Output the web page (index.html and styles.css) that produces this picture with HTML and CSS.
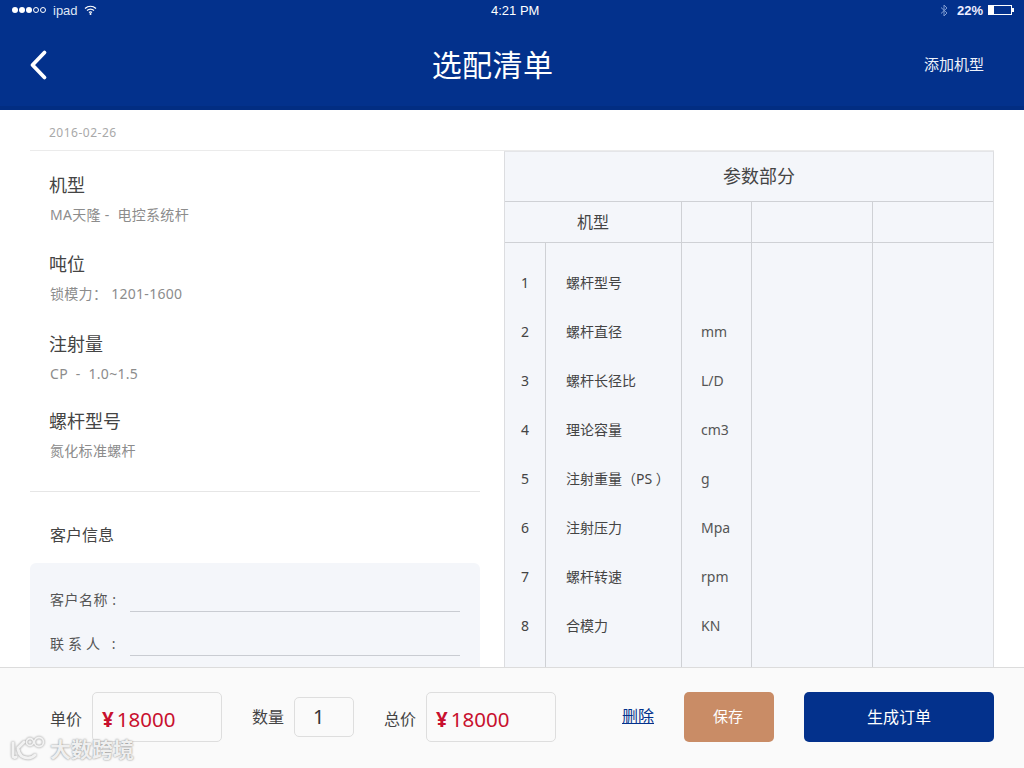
FILE: index.html
```html
<!DOCTYPE html>
<html lang="zh-CN">
<head>
<meta charset="utf-8">
<title>选配清单</title>
<link rel="stylesheet" href="styles.css">
</head>
<body>
<div class="page">
  <header class="topbar">
    <div class="status">
      <div class="status-left">
        <span class="dot"></span><span class="dot"></span><span class="dot"></span><span class="dot off"></span><span class="dot off"></span>
        <span class="carrier">ipad</span>
        <svg class="wifi" width="13" height="10" viewBox="0 0 13 10"><path d="M1 3.6C4.3.6 8.7.6 12 3.6M3 5.6c2.2-1.900 4.800-1.900 7 0M5 7.500c1-.8 2-.8 3 0" fill="none" stroke="#fff" stroke-width="1.300"/><circle cx="6.500" cy="9" r="1" fill="#fff"/></svg>
      </div>
      <div class="status-time">4:21 PM</div>
      <div class="status-right">
        <svg class="bt" width="8" height="13" viewBox="0 0 8 13"><path d="M1 3.500l6 5.500-3 3V1l3 3-6 5.500" fill="none" stroke="#7f9bd0" stroke-width="1"/></svg>
        <span class="pct">22%</span>
        <span class="battery"><span class="battery-fill"></span></span><span class="battery-tip"></span>
      </div>
    </div>
    <nav class="nav">
      <svg class="back" width="20" height="32" viewBox="0 0 20 32"><path d="M16.500 3.500L4.500 16l12 12.500" fill="none" stroke="#fff" stroke-width="3.800" stroke-linecap="round" stroke-linejoin="round"/></svg>
      <h1 class="title">选配清单</h1>
      <a class="add">添加机型</a>
    </nav>
  </header>

  <main class="main">
    <div class="date-row">2016-02-26</div>
    <div class="columns">
      <section class="left">
        <div class="specs">
          <div class="spec spec-first"><div class="spec-name">机型</div><div class="spec-value">MA天隆 -&nbsp; 电控系统杆</div></div>
          <div class="spec"><div class="spec-name">吨位</div><div class="spec-value">锁模力： 1201-1600</div></div>
          <div class="spec spec-short"><div class="spec-name">注射量</div><div class="spec-value">CP &nbsp;-&nbsp; 1.0~1.5</div></div>
          <div class="spec"><div class="spec-name">螺杆型号</div><div class="spec-value">氮化标准螺杆</div></div>
        </div>
        <h2 class="customer-title">客户信息</h2>
        <div class="customer">
          <div class="field"><span class="field-label">客户名称 :</span><span class="field-line"></span></div>
          <div class="field"><span class="field-label spaced">联系人 :</span><span class="field-line"></span></div>
        </div>
      </section>

      <section class="params">
        <div class="params-title">参数部分</div>
        <div class="params-head">
          <div class="head-model">机型</div><div class="head-cell"></div><div class="head-cell"></div><div class="head-cell last"></div>
        </div>
        <div class="params-body">
          <div class="col col-no">
            <div class="cell">1</div><div class="cell">2</div><div class="cell">3</div><div class="cell">4</div><div class="cell">5</div><div class="cell">6</div><div class="cell">7</div><div class="cell">8</div>
          </div>
          <div class="col col-name">
            <div class="cell">螺杆型号</div><div class="cell">螺杆直径</div><div class="cell">螺杆长径比</div><div class="cell">理论容量</div><div class="cell">注射重量（PS ）</div><div class="cell">注射压力</div><div class="cell">螺杆转速</div><div class="cell">合模力</div>
          </div>
          <div class="col col-unit">
            <div class="cell"></div><div class="cell">mm</div><div class="cell">L/D</div><div class="cell">cm3</div><div class="cell">g</div><div class="cell">Mpa</div><div class="cell">rpm</div><div class="cell">KN</div>
          </div>
          <div class="col col-a"></div>
          <div class="col col-b"></div>
        </div>
      </section>
    </div>
  </main>

  <footer class="footer">
    <span class="f-label">单价</span>
    <div class="price"><span class="yen">¥</span>18000</div>
    <span class="f-label qty-label">数量</span>
    <div class="qty">1</div>
    <span class="f-label total-label">总价</span>
    <div class="price"><span class="yen">¥</span>18000</div>
    <a class="delete">删除</a>
    <button class="btn save">保存</button>
    <button class="btn order">生成订单</button>
  </footer>

  <div class="watermark">
    <svg class="wm-logo" width="38" height="26" viewBox="0 0 38 26"><path d="M4 7v13c0 1.500 2 2 3 1M9 13c1 6 5 9 10 9 3 0 5-1 7-3M9 12l6-6" fill="none" stroke="#f2f2f2" stroke-width="3" stroke-linecap="round"/><circle cx="21" cy="6" r="3.500" fill="none" stroke="#f2f2f2" stroke-width="1.800"/><circle cx="30" cy="6" r="4.500" fill="none" stroke="#f2f2f2" stroke-width="1.800"/></svg>
    <span class="wm-text">大数跨境</span>
  </div>
</div>
</body>
</html>
```
FILE: styles.css
```css
* { box-sizing: border-box; }
html, body { margin: 0; padding: 0; }
body { font-family: "Noto Sans", "Noto Sans CJK SC", sans-serif; background: #fff; color: #333; }
.page { position: relative; width: 1024px; height: 768px; overflow: hidden; display: flex; flex-direction: column; }

.topbar { height: 110px; flex: none; background: #03318c; color: #fff; border-bottom: 4px solid #022d82; }
.status { position: relative; height: 20px; display: flex; justify-content: space-between; align-items: center; padding: 0 10px 0 12px; font-family: "Liberation Sans", sans-serif; font-size: 13px; }
.status-left { display: flex; align-items: center; }
.dot { width: 6px; height: 6px; border-radius: 50%; background: #fff; margin-right: 1px; }
.dot.off { background: none; border: 1px solid #fff; }
.carrier { margin-left: 6px; margin-right: 6px; color: #dfe6f5; }
.status-time { position: absolute; left: 491px; top: 3px; font-size: 13px; }
.status-right { display: flex; align-items: center; }
.pct { margin-left: 9px; margin-right: 5px; font-weight: 700; font-size: 13px; color: #eef; }
.battery { width: 24px; height: 10px; border: 1px solid #fff; display: block; }
.battery-fill { display: block; width: 5px; height: 100%; background: #fff; }
.battery-tip { width: 2px; height: 4px; background: #fff; }

.nav { position: relative; display: flex; align-items: center; justify-content: space-between; padding: 0 40px 0 28px; height: 90px; }
.back { display: block; }
.title { position: absolute; left: 0; width: 985px; margin: 0; text-align: center; font-size: 30px; letter-spacing: .4px; font-weight: 400; line-height: 40px; }
.add { font-size: 15px; color: #eef2fa; padding-bottom: 4px; }

.main { flex: 1; min-height: 0; padding: 0 30px; }
.date-row { height: 41px; border-bottom: 1px solid #ebebeb; padding: 14px 0 0 19px; font-size: 12px; letter-spacing: .5px; line-height: 18px; color: #a9a9a9; }
.columns { display: flex; gap: 24px; align-items: flex-start; }

.left { width: 450px; flex: none; }
.specs { height: 341px; border-bottom: 1px solid #e6e6e6; padding: 21px 0 0 19px; }
.spec { height: 79.5px; }
.spec-first { height: 79px; }
.spec-short { height: 77.5px; }
.spec-name { font-size: 18px; line-height: 26px; color: #444; }
.spec-value { font-size: 14px; letter-spacing: .3px; line-height: 20px; margin: 7px 0 0 1px; color: #8c8c8c; }
.customer-title { margin: 31px 0 0 20px; font-size: 16px; font-weight: 400; line-height: 24px; color: #444; }
.customer { margin-top: 16px; height: 200px; background: #f4f6fa; border-radius: 6px; padding: 24px 20px 0; }
.field { display: flex; align-items: flex-end; height: 24px; margin-bottom: 20px; }
.field-label { width: 80px; flex: none; font-size: 14px; letter-spacing: .5px; line-height: 24px; margin-bottom: -1px; color: #555; white-space: nowrap; }
.field-label.spaced { letter-spacing: 4px; }
.field-line { flex: 1; height: 1px; background: #c9ccd2; margin-bottom: -1px; }

.params { width: 490px; flex: none; height: 520px; background: #f4f6fa; border: 1px solid #dcdde0; border-top-color: #e4e5e8; }
.params-title { height: 50px; border-bottom: 1px solid #cfd1d5; padding-left: 20px; text-align: center; line-height: 49px; font-size: 18px; color: #444; }
.params-head { height: 41px; display: flex; border-bottom: 1px solid #cfd1d5; }
.head-model { width: 177px; flex: none; border-right: 1px solid #cfd1d5; text-align: center; line-height: 41px; font-size: 16px; color: #444; }
.head-cell { border-right: 1px solid #cfd1d5; }
.head-cell:nth-child(2) { width: 70px; }
.head-cell:nth-child(3) { width: 121px; }
.head-cell.last { border-right: 0; flex: 1; }
.params-body { display: flex; height: 430px; }
.col { border-right: 1px solid #cfd1d5; padding-top: 15px; flex: none; }
.col-no { width: 41px; }
.col-name { width: 136px; }
.col-unit { width: 70px; }
.col-a { width: 121px; }
.col-b { flex: 1; border-right: 0; }
.cell { height: 49px; line-height: 49px; font-size: 14px; color: #444; white-space: nowrap; }
.col-no .cell { padding-left: 16px; }
.col-name .cell { padding-left: 20px; }
.col-unit .cell { padding-left: 19px; color: #555; }

.footer { position: absolute; left: 0; right: 0; bottom: 0; height: 101px; background: #fafafa; border-top: 1px solid #dcdcdc; display: flex; align-items: flex-start; padding: 24px 30px 0 50px; }
.f-label { font-size: 16px; line-height: 24px; color: #444; margin-top: 15px; width: 32px; flex: none; }
.qty-label { margin-left: 30px; margin-top: 13px; }
.total-label { margin-left: 30px; }
.price { width: 130px; height: 50px; margin-left: 10px; border: 1px solid #dedede; border-radius: 5px; padding-left: 9px; line-height: 53px; font-size: 20.5px; color: #c8102e; white-space: nowrap; flex: none; }
.yen { margin-right: 3px; font-weight: 700; }
.qty { width: 60px; height: 40px; margin: 5px 0 0 10px; border: 1px solid #dedede; border-radius: 5px; padding-left: 18px; line-height: 37px; font-size: 20px; color: #333; flex: none; }
.delete { margin-left: 66px; margin-top: 12px; font-size: 16px; line-height: 24px; color: #03318c; text-decoration: underline; flex: none; }
.btn { border: 0; border-radius: 5px; height: 50px; color: #fff; font-family: inherit; padding: 0 2px 3px 0; flex: none; }
.save { width: 90px; margin-left: 30px; background: #c98c66; font-size: 15px; }
.order { width: 190px; margin-left: 30px; background: #03318c; font-size: 16px; padding-right: 0; }

.watermark { position: absolute; left: 9px; top: 735px; display: flex; align-items: center; gap: 3px; }
.wm-logo { filter: drop-shadow(0 0 1px #8a8a8a); }
.wm-text { font-size: 21px; line-height: 28px; font-weight: 700; color: #efefef; text-shadow: 0 0 2px #777; }
```
